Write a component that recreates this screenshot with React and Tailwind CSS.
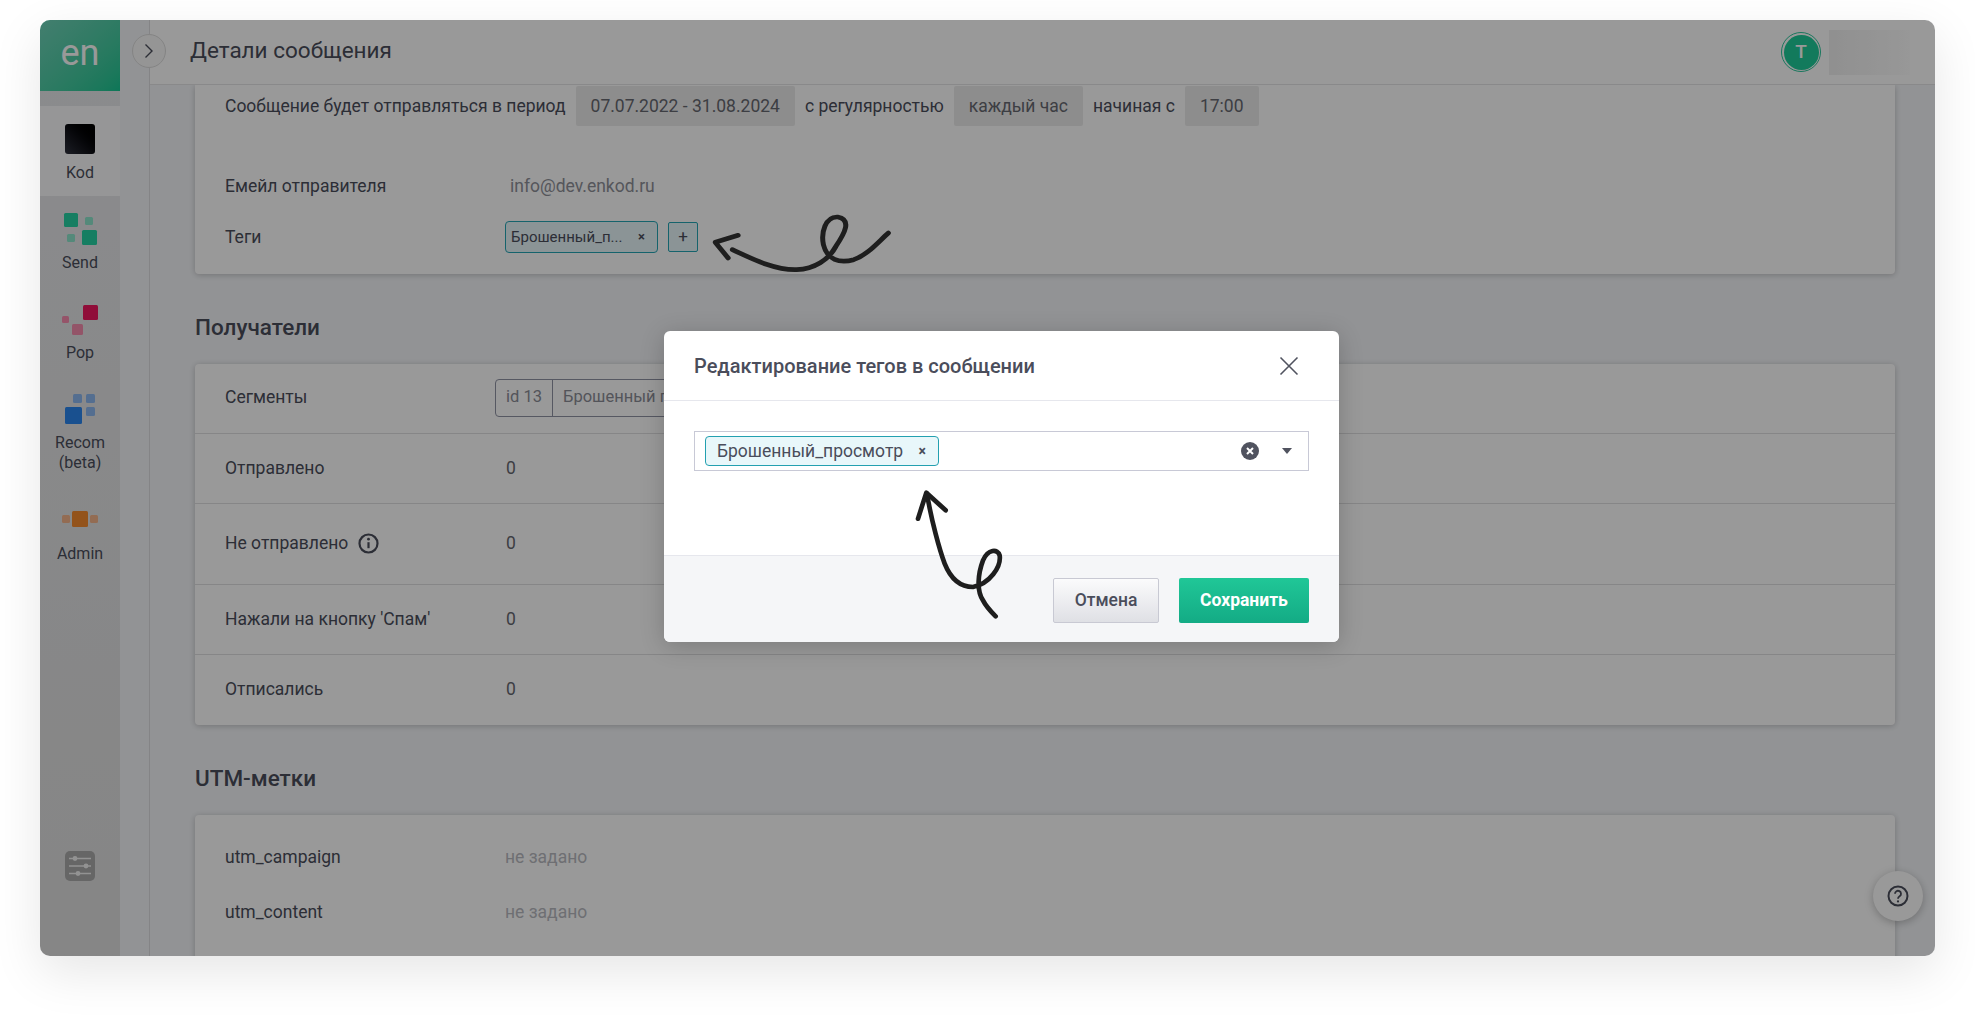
import React from "react";

// Square groups of the product icons, coordinates are relative to a 36px wide box
const SEND_SQUARES = [
    { x: 2, y: 0, s: 14, c: "#25d3a4" },
    { x: 23, y: 4, s: 8, c: "#8ce5cb" },
    { x: 5, y: 21, s: 8, c: "#8ce5cb" },
    { x: 20, y: 17, s: 15, c: "#25d3a4" },
];
const POP_SQUARES = [
    { x: 21, y: 0, s: 15, c: "#f0175f" },
    { x: 0, y: 11, s: 7, c: "#f98db0" },
    { x: 10, y: 19, s: 11, c: "#f58dae" },
];
const RECOM_SQUARES = [
    { x: 11, y: 0, s: 9, c: "#8cb8f0" },
    { x: 24, y: 0, s: 9, c: "#8cb8f0" },
    { x: 24, y: 13, s: 9, c: "#8cb8f0" },
    { x: 3, y: 13, s: 17, c: "#2a85ee" },
];
const ADMIN_SQUARES = [
    { x: 0, y: 4, s: 8, c: "#f5b48a" },
    { x: 10, y: 0, s: 16, c: "#f58a2e" },
    { x: 28, y: 4, s: 8, c: "#f5b48a" },
];

const RECIPIENT_ROWS = [
    { label: "Отправлено", height: "h-[70px]" },
    { label: "Не отправлено", height: "h-[81px]", info: true },
    { label: "Нажали на кнопку 'Спам'", height: "h-[70px]" },
    { label: "Отписались", height: "h-[70px]", last: true },
];

const Squares = ({ items, height }) => (
    <svg width="36" height={height} viewBox={`0 0 36 ${height}`}>
        {items.map((item) => (
            <rect
                key={`${item.x}-${item.y}`}
                x={item.x}
                y={item.y}
                width={item.s}
                height={item.s}
                rx="1.5"
                fill={item.c}
            />
        ))}
    </svg>
);

const NavItem = ({ label, height, className, children }) => (
    <div className={`flex flex-col items-center ${height} ${className || ""}`}>
        {children}
        <span className="text-center text-[16px] leading-[20px] text-[#4a4d5b]">
            {label}
        </span>
    </div>
);

const Sidebar = () => (
    <aside className="flex h-full w-[80px] shrink-0 flex-col bg-gradient-to-b from-[#e8e9ec] to-[#dfdfdf]">
        <div className="flex h-[71px] items-center justify-center bg-gradient-to-br from-[#6fd3b9] to-[#14c692] pb-[6px] text-[36px] leading-none text-white">
            en
        </div>
        <div className="h-[15px]" />
        {/* Kod */}
        <NavItem label="Kod" height="h-[90px]" className="bg-[#fbfbfc] pt-[18px]">
            <div className="mb-[9px] h-[30px] w-[30px] rounded-[3px] bg-gradient-to-tr from-[#30323e] to-black" />
        </NavItem>
        {/* Send */}
        <NavItem label="Send" height="h-[90px]" className="pt-[17px]">
            <div className="mb-[8px] h-[32px]">
                <Squares items={SEND_SQUARES} height={32} />
            </div>
        </NavItem>
        {/* Pop */}
        <NavItem label="Pop" height="h-[90px]" className="pt-[19px]">
            <div className="mb-[8px] h-[30px]">
                <Squares items={POP_SQUARES} height={30} />
            </div>
        </NavItem>
        {/* Recom */}
        <NavItem label={<>Recom<br />(beta)</>} height="h-[110px]" className="pt-[18px]">
            <div className="mb-[9px] h-[30px]">
                <Squares items={RECOM_SQUARES} height={30} />
            </div>
        </NavItem>
        {/* Admin */}
        <NavItem label="Admin" height="h-[80px]" className="pt-[25px]">
            <div className="mb-[17px] h-[16px]">
                <Squares items={ADMIN_SQUARES} height={16} />
            </div>
        </NavItem>
        {/* Settings */}
        <div className="mt-auto flex justify-center pb-[75px]">
            <svg width="30" height="30" viewBox="0 0 30 30">
                <rect width="30" height="30" rx="5" fill="#aaaaaa" />
                <g stroke="#f4f4f4" strokeWidth="1.5">
                    <path d="M4 7.5h22M4 15h22M4 22.5h22" />
                </g>
                <g fill="#f4f4f4">
                    <circle cx="10" cy="7.5" r="2.4" />
                    <circle cx="21" cy="15" r="2.4" />
                    <circle cx="13" cy="22.5" r="2.4" />
                </g>
            </svg>
        </div>
    </aside>
);

const Rail = () => (
    <div className="relative w-[30px] shrink-0 border-r border-[#dcdde0]">
        <div className="absolute left-[12px] top-[14px] flex h-[34px] w-[34px] items-center justify-center rounded-full border border-[#dcdcdc] bg-[#f8f8f8]">
            <svg width="10" height="16" viewBox="0 0 10 16" fill="none">
                <path d="M1.5 1.5 8 8l-6.5 6.5" stroke="#4a4d5b" strokeWidth="1.4" />
            </svg>
        </div>
    </div>
);

const Header = () => (
    <header className="flex h-[65px] shrink-0 items-center justify-between border-b border-[#e4e4e6] bg-white pl-[40px] pr-[25px]">
        <h1 className="pb-[3px] text-[22.5px] font-normal text-[#4a4d5b]">Детали сообщения</h1>
        <div className="flex items-center gap-[8px]">
            <div className="flex h-[40px] w-[40px] items-center justify-center rounded-full border border-[#2bc79c] bg-white">
                <div className="flex h-[35px] w-[35px] items-center justify-center rounded-full bg-[#1ecc99] text-[19px] font-medium text-white">
                    T
                </div>
            </div>
            <div className="h-[45px] w-[81px] bg-gradient-to-r from-[#f0f0f0] to-[#fdfdfd]" />
        </div>
    </header>
);

const Chip = ({ children }) => (
    <span className="flex h-[40px] items-center rounded-[2px] bg-[#ececec] px-[15px] text-[#666870]">
        {children}
    </span>
);

const InfoIcon = () => (
    <svg width="21" height="21" viewBox="0 0 21 21" fill="none">
        <circle cx="10.5" cy="10.5" r="9" stroke="#4a4d5b" strokeWidth="2.2" />
        <path d="M10.5 9.2v6" stroke="#4a4d5b" strokeWidth="2.2" />
        <circle cx="10.5" cy="6.2" r="1.4" fill="#4a4d5b" />
    </svg>
);

const Content = () => (
    <div className="min-h-0 flex-1 overflow-hidden pl-[45px] pr-[40px]">
        {/* Message Schedule Card */}
        <section className="h-[189px] rounded-b-[4px] bg-white pl-[30px] pt-px shadow-[0_1px_6px_rgba(0,0,0,0.22)]">
            <div className="flex h-[40px] items-center">
                <span className="mr-[10px]">Сообщение будет отправляться в период</span>
                <Chip>07.07.2022 - 31.08.2024</Chip>
                <span className="mx-[10px]">с регулярностью</span>
                <Chip>каждый час</Chip>
                <span className="mx-[10px]">начиная с</span>
                <Chip>17:00</Chip>
            </div>
            <div className="mt-[40px] flex h-[40px] items-center">
                <span className="w-[285px]">Емейл отправителя</span>
                <span className="text-[#8e9098]">info@dev.enkod.ru</span>
            </div>
            <div className="mt-[11px] flex h-[40px] items-center">
                <span className="w-[280px]">Теги</span>
                <span className="flex h-[32px] w-[153px] items-center justify-between rounded-[4px] border border-[#23a5b5] bg-[#e8f7fa] pl-[5px] pr-[12px] text-[15px]">
                    Брошенный_п...
                    <span className="text-[13px] font-bold">×</span>
                </span>
                <span className="ml-[10px] flex h-[30px] w-[30px] items-center justify-center rounded-[2px] border border-[#23a5b5] bg-[#e8f7fa] text-[17px]">
                    +
                </span>
            </div>
        </section>
        {/* End Message Schedule Card */}

        {/* Recipients */}
        <h2 className="mt-[39px] mb-[22px] text-[22.5px] leading-[29px] font-medium">Получатели</h2>
        <section className="rounded-[4px] bg-white shadow-[0_1px_6px_rgba(0,0,0,0.22)]">
            <div className="flex h-[70px] items-center border-b border-[#e0e0e2] pl-[30px] pb-[2px]">
                <span className="w-[270px]">Сегменты</span>
                <div className="flex h-[38px] w-[500px] items-center rounded-[4px] border border-[#8f93a3] text-[16.5px] text-[#8b8d96]">
                    <span className="flex h-full w-[57px] items-center justify-center border-r border-[#8f93a3]">
                        id 13
                    </span>
                    <span className="pl-[10px]">Брошенный просмотр</span>
                </div>
            </div>
            {RECIPIENT_ROWS.map((row) => (
                <div
                    key={row.label}
                    className={`flex items-center pb-px pl-[30px] ${row.height} ${row.last ? "" : "border-b border-[#e0e0e2]"}`}
                >
                    <span className="flex w-[281px] items-center gap-[10px]">
                        {row.label}
                        {row.info && <InfoIcon />}
                    </span>
                    <span className="text-[#666870]">0</span>
                </div>
            ))}
        </section>
        {/* End Recipients */}

        {/* UTM */}
        <h2 className="mt-[39px] mb-[22px] text-[22.5px] leading-[29px] font-medium">UTM-метки</h2>
        <section className="h-[300px] rounded-[4px] bg-white pl-[30px] pt-[15px] shadow-[0_1px_6px_rgba(0,0,0,0.22)]">
            <div className="flex h-[55px] items-center">
                <span className="w-[280px]">utm_campaign</span>
                <span className="text-[#b8b9c0]">не задано</span>
            </div>
            <div className="flex h-[55px] items-center">
                <span className="w-[280px]">utm_content</span>
                <span className="text-[#b8b9c0]">не задано</span>
            </div>
        </section>
        {/* End UTM */}
    </div>
);

const TagsModal = () => (
    <div className="ml-[624px] mt-[311px] h-[311px] w-[675px] overflow-hidden rounded-[6px] bg-white shadow-[0_4px_24px_rgba(0,0,0,0.2)]">
        <div className="flex h-[70px] items-center justify-between border-b border-[#e6e7ed] pl-[30px] pr-[40px]">
            <h3 className="text-[20px] font-medium">Редактирование тегов в сообщении</h3>
            <svg width="20" height="20" viewBox="0 0 20 20" fill="none">
                <path d="M1.5 1.5l17 17M18.5 1.5l-17 17" stroke="#50535f" strokeWidth="1.6" />
            </svg>
        </div>
        <div className="h-[154px] px-[30px] pt-[30px]">
            <div className="flex h-[40px] items-center justify-between border border-[#c8c9d6] pl-[10px] pr-[16px]">
                <span className="flex h-[30px] w-[234px] items-center justify-between rounded-[4px] border border-[#23a0b0] bg-[#e8f7fa] pl-[11px] pr-[12px]">
                    Брошенный_просмотр
                    <span className="text-[14px] font-bold">×</span>
                </span>
                <div className="flex items-center gap-[23px]">
                    <svg width="18" height="18" viewBox="0 0 18 18" fill="none">
                        <circle cx="9" cy="9" r="9" fill="#50535f" />
                        <path d="M6 6l6 6M12 6l-6 6" stroke="#fff" strokeWidth="2" />
                    </svg>
                    <svg width="10" height="6" viewBox="0 0 10 6">
                        <path d="M0 0h10L5 6z" fill="#50535f" />
                    </svg>
                </div>
            </div>
        </div>
        <div className="flex h-[87px] justify-end gap-[20px] border-t border-[#e6e7ed] bg-[#f5f6f8] pr-[30px] pt-[22px]">
            <button className="h-[45px] w-[106px] rounded-[2px] border border-[#c8c9d3] bg-gradient-to-b from-[#fbfbfc] to-[#dfe0e5] font-medium">
                Отмена
            </button>
            <button className="h-[45px] w-[130px] rounded-[2px] bg-gradient-to-b from-[#20c797] to-[#13ab85] font-bold text-white">
                Сохранить
            </button>
        </div>
    </div>
);

// Hand drawn arrows, path coordinates come from the zoomed reference crops
const TagArrow = () => (
    <svg
        className="absolute left-[671px] top-[193px]"
        width="182"
        height="60"
        viewBox="870 460 510 180"
        preserveAspectRatio="none"
        fill="none"
        stroke="#1e1e1e"
        strokeWidth="14"
        strokeLinecap="round"
        strokeLinejoin="round"
    >
        <path d="M930 570C990 600 1050 632 1110 630C1160 628 1200 600 1220 560C1245 520 1265 480 1225 472C1190 470 1178 520 1185 555C1195 600 1230 612 1270 600C1310 585 1340 545 1367 520" />
        <path d="M946 527L882 548L918 595" />
    </svg>
);

const ModalArrow = () => (
    <svg
        className="absolute left-[873px] top-[467px]"
        width="94"
        height="134"
        viewBox="790 500 282 402"
        fill="none"
        stroke="#1e1e1e"
        strokeWidth="14"
        strokeLinecap="round"
        strokeLinejoin="round"
    >
        <path d="M832 520C845 600 870 690 885 730C905 780 935 800 970 800C1020 790 1055 740 1050 705C1045 685 1015 685 1000 720C985 760 980 810 1000 840C1010 860 1025 875 1038 888" />
        <path d="M805 595L830 517L888 570" />
    </svg>
);

const App = () => {
    return (
        <div className="h-[1017px] w-[1975px] overflow-hidden bg-white pl-[40px] pt-[20px] font-[Roboto,sans-serif] text-[17.5px] text-[#4a4d5b]">
            <div className="relative h-[936px] w-[1895px] overflow-hidden rounded-[10px] bg-[#f4f6f9] shadow-[0_16px_50px_rgba(0,0,0,0.1)]">
                <div className="flex h-full">
                    <Sidebar />
                    <Rail />
                    <main className="flex min-w-0 flex-1 flex-col">
                        <Header />
                        <Content />
                    </main>
                </div>
                {/* Help Button */}
                <div className="absolute bottom-[35px] right-[12px] flex h-[50px] w-[50px] items-center justify-center rounded-full bg-white shadow-[0_2px_8px_rgba(0,0,0,0.25)]">
                    <svg width="22" height="22" viewBox="0 0 22 22" fill="none">
                        <circle cx="11" cy="11" r="9.5" stroke="#4a4d5b" strokeWidth="2" />
                        <path d="M8 8.8a3 3 0 1 1 4.6 2.5c-1 .7-1.6 1.2-1.6 2.4" stroke="#4a4d5b" strokeWidth="1.8" />
                        <circle cx="11" cy="16.4" r="1.1" fill="#4a4d5b" />
                    </svg>
                </div>
                {/* Modal Overlay */}
                <div className="absolute inset-0 bg-black/40">
                    <TagsModal />
                    <TagArrow />
                    <ModalArrow />
                </div>
            </div>
        </div>
    );
};

export default App;
